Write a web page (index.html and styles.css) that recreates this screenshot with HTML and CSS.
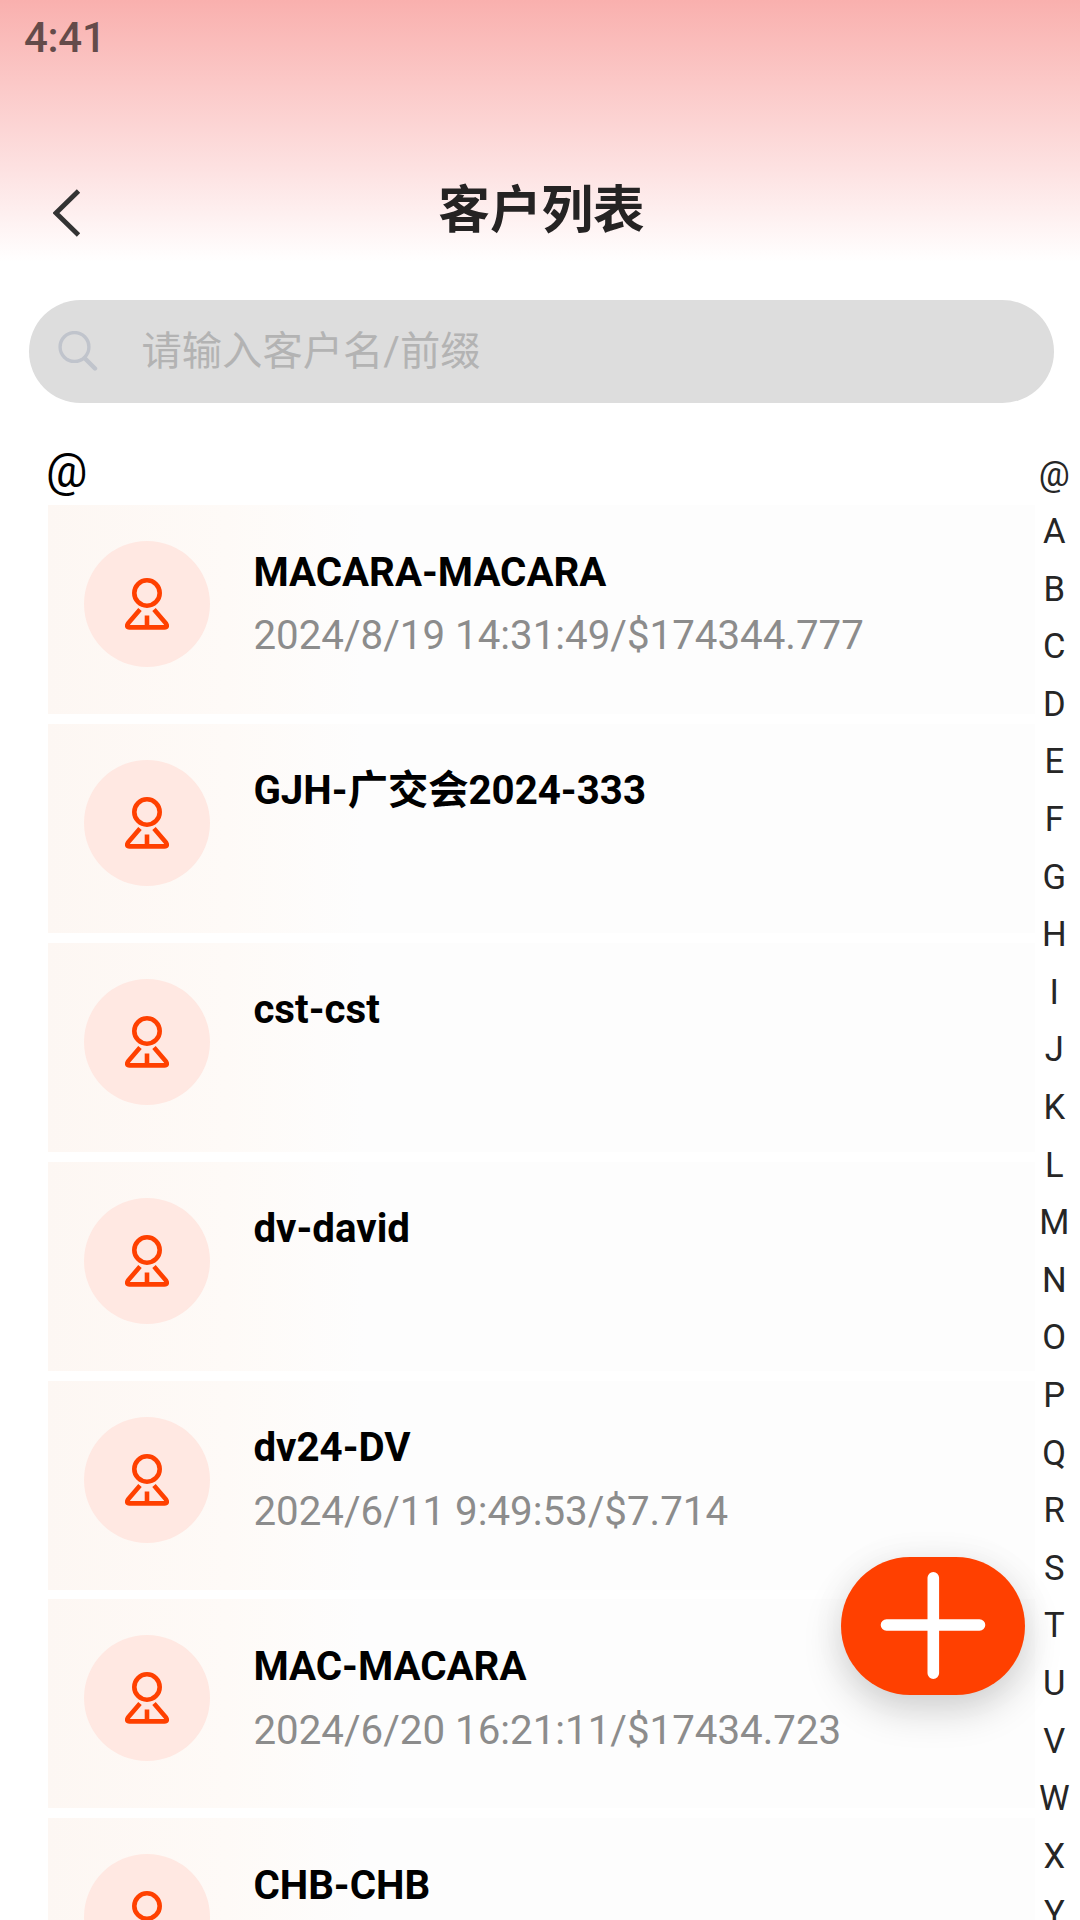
FILE: index.html
```html
<!DOCTYPE html>
<html lang="zh">
<head>
    <meta charset="UTF-8">
    <meta name="viewport" content="width=device-width, initial-scale=1.0">
    <title>客户列表</title>
    <link rel="stylesheet" href="styles.css">
</head>
<body>
    <!-- icône client réutilisée dans chaque ligne -->
    <svg width="0" height="0" class="sprite">
        <symbol id="user" viewBox="0 0 44 52">
            <g fill="none" stroke="#ff4000" stroke-width="4.6">
                <circle cx="22" cy="15" r="12.7"/>
                <path d="M15 31.6 L3.2 45.2 Q0.6 49.4 4.6 49.4 H39.4 Q43.4 49.4 40.8 45.2 L29 31.6" stroke-linejoin="round"/>
                <path d="M22 37.5 V49"/>
            </g>
        </symbol>
    </svg>

    <div class="header">
        <div class="status-bar">4:41</div>
        <div class="nav-bar">
            <svg class="back" width="28" height="48" viewBox="0 0 28 48">
                <path d="M25.5 2 L3 24 L25.5 46" fill="none" stroke="#333" stroke-width="4.8"/>
            </svg>
            <h1>客户列表</h1>
        </div>
    </div>

    <div class="search">
        <svg width="40" height="40" viewBox="0 0 40 40">
            <g fill="none" stroke="#c0c4cc" stroke-linecap="round">
                <circle cx="16.5" cy="16" r="14.4" stroke-width="3.4"/>
                <path d="M27 27.5 L37 37.5" stroke-width="4.4"/>
            </g>
        </svg>
        <input type="text" placeholder="请输入客户名/前缀">
    </div>

    <div class="content">
        <div class="list">
            <div class="section">@</div>
            <div id="customers"></div>
        </div>
        <div id="letters" class="letters"></div>
    </div>

    <div class="add">
        <svg width="106" height="108" viewBox="0 0 106 108">
            <path d="M6.5 53 H99.5 M53.3 5.8 V101.2" stroke="#fff" stroke-width="11.6" stroke-linecap="round"/>
        </svg>
    </div>

    <script>
        const customers = [
            { name: "MACARA-MACARA", info: "2024/8/19 14:31:49/$174344.777" },
            { name: "GJH-广交会2024-333", info: "" },
            { name: "cst-cst", info: "" },
            { name: "dv-david", info: "" },
            { name: "dv24-DV", info: "2024/6/11 9:49:53/$7.714" },
            { name: "MAC-MACARA", info: "2024/6/20 16:21:11/$17434.723" },
            { name: "CHB-CHB", info: "" }
        ];

        document.getElementById("customers").innerHTML = customers.map(c => `
            <div class="card">
                <div class="avatar"><svg width="44" height="52"><use href="#user"/></svg></div>
                <div class="text">
                    <div class="name">${c.name}</div>
                    <div class="info">${c.info}</div>
                </div>
            </div>`).join("");

        document.getElementById("letters").innerHTML = "@ABCDEFGHIJKLMNOPQRSTUVWXY"
            .split("").map(l => `<span>${l}</span>`).join("");
    </script>
</body>
</html>
```

FILE: styles.css
```css
* {
    box-sizing: border-box;
}
body {
    font-family: Roboto, "Noto Sans CJK SC", sans-serif;
    margin: 0;
    height: 1920px;
    overflow: hidden;
    background: #fff;
    color: #000;
}
.sprite {
    display: block;
}
.header {
    height: 300px;
    background: linear-gradient(180deg, #f9b0ae 0, #fde1e1 168px, #fff 262px);
}
.status-bar {
    height: 144px;
    padding: 13px 0 0 24px;
    font-size: 42px;
    line-height: 50px;
    font-weight: 500;
    letter-spacing: -0.3px;
    color: #644b4a;
}
.nav-bar {
    display: grid;
    grid-template-columns: 132px 1fr 132px;
    align-items: center;
    height: 130px;
}
.back {
    margin: 7px 0 0 53px;
}
h1 {
    margin: 4px 0 0 3px;
    text-align: center;
    font-size: 51.6px;
    line-height: 76px;
    font-weight: 700;
    color: #252323;
}
.search {
    display: flex;
    align-items: center;
    height: 103px;
    margin: 0 26px 0 29px;
    padding: 0 28px 0 29px;
    border-radius: 52px;
    background: #ddd;
}
.search svg {
    margin-bottom: 2px;
}
.search input {
    flex: 1;
    margin-left: 43.5px;
    padding: 0;
    border: 0;
    outline: none;
    background: transparent;
    font-family: inherit;
    font-size: 40.3px;
}
.search input::placeholder {
    color: #b3b3b3;
}
.content {
    display: flex;
}
.list {
    width: 987px;
    margin-left: 48px;
    padding-top: 42px;
}
.section {
    height: 60px;
    margin-left: -2px;
    font-size: 46.08px;
    line-height: 52px;
}
.card {
    display: flex;
    height: 209px;
    margin-bottom: 9.9px;
    padding: 36px;
    background: linear-gradient(90deg, #fdf7f3 0%, #fefaf7 18%, #fdfdfd 32%);
}
.avatar {
    display: flex;
    align-items: center;
    justify-content: center;
    width: 126px;
    height: 126px;
    border-radius: 50%;
    background: #ffe8e2;
}
.text {
    margin: 1.6px 0 0 43.4px;
}
.name {
    font-size: 40.28px;
    line-height: 60px;
    font-weight: 700;
}
.info {
    margin-top: 3.8px;
    font-size: 40.28px;
    line-height: 60px;
    color: #8c8c8c;
}
.letters {
    display: flex;
    flex-direction: column;
    width: 38.5px;
    padding-top: 42.5px;
}
.letters span {
    height: 57.6px;
    line-height: 57.6px;
    text-align: center;
    font-size: 34.56px;
    color: #262626;
}

/* bouton flottant */
.add {
    position: absolute;
    left: 841px;
    top: 1557px;
    display: flex;
    align-items: center;
    justify-content: center;
    width: 184px;
    height: 138px;
    border-radius: 69px;
    background: #ff4000;
    box-shadow: 0 16px 38px rgba(0, 0, 0, 0.17), 0 0 40px rgba(0, 0, 0, 0.04);
}
```
